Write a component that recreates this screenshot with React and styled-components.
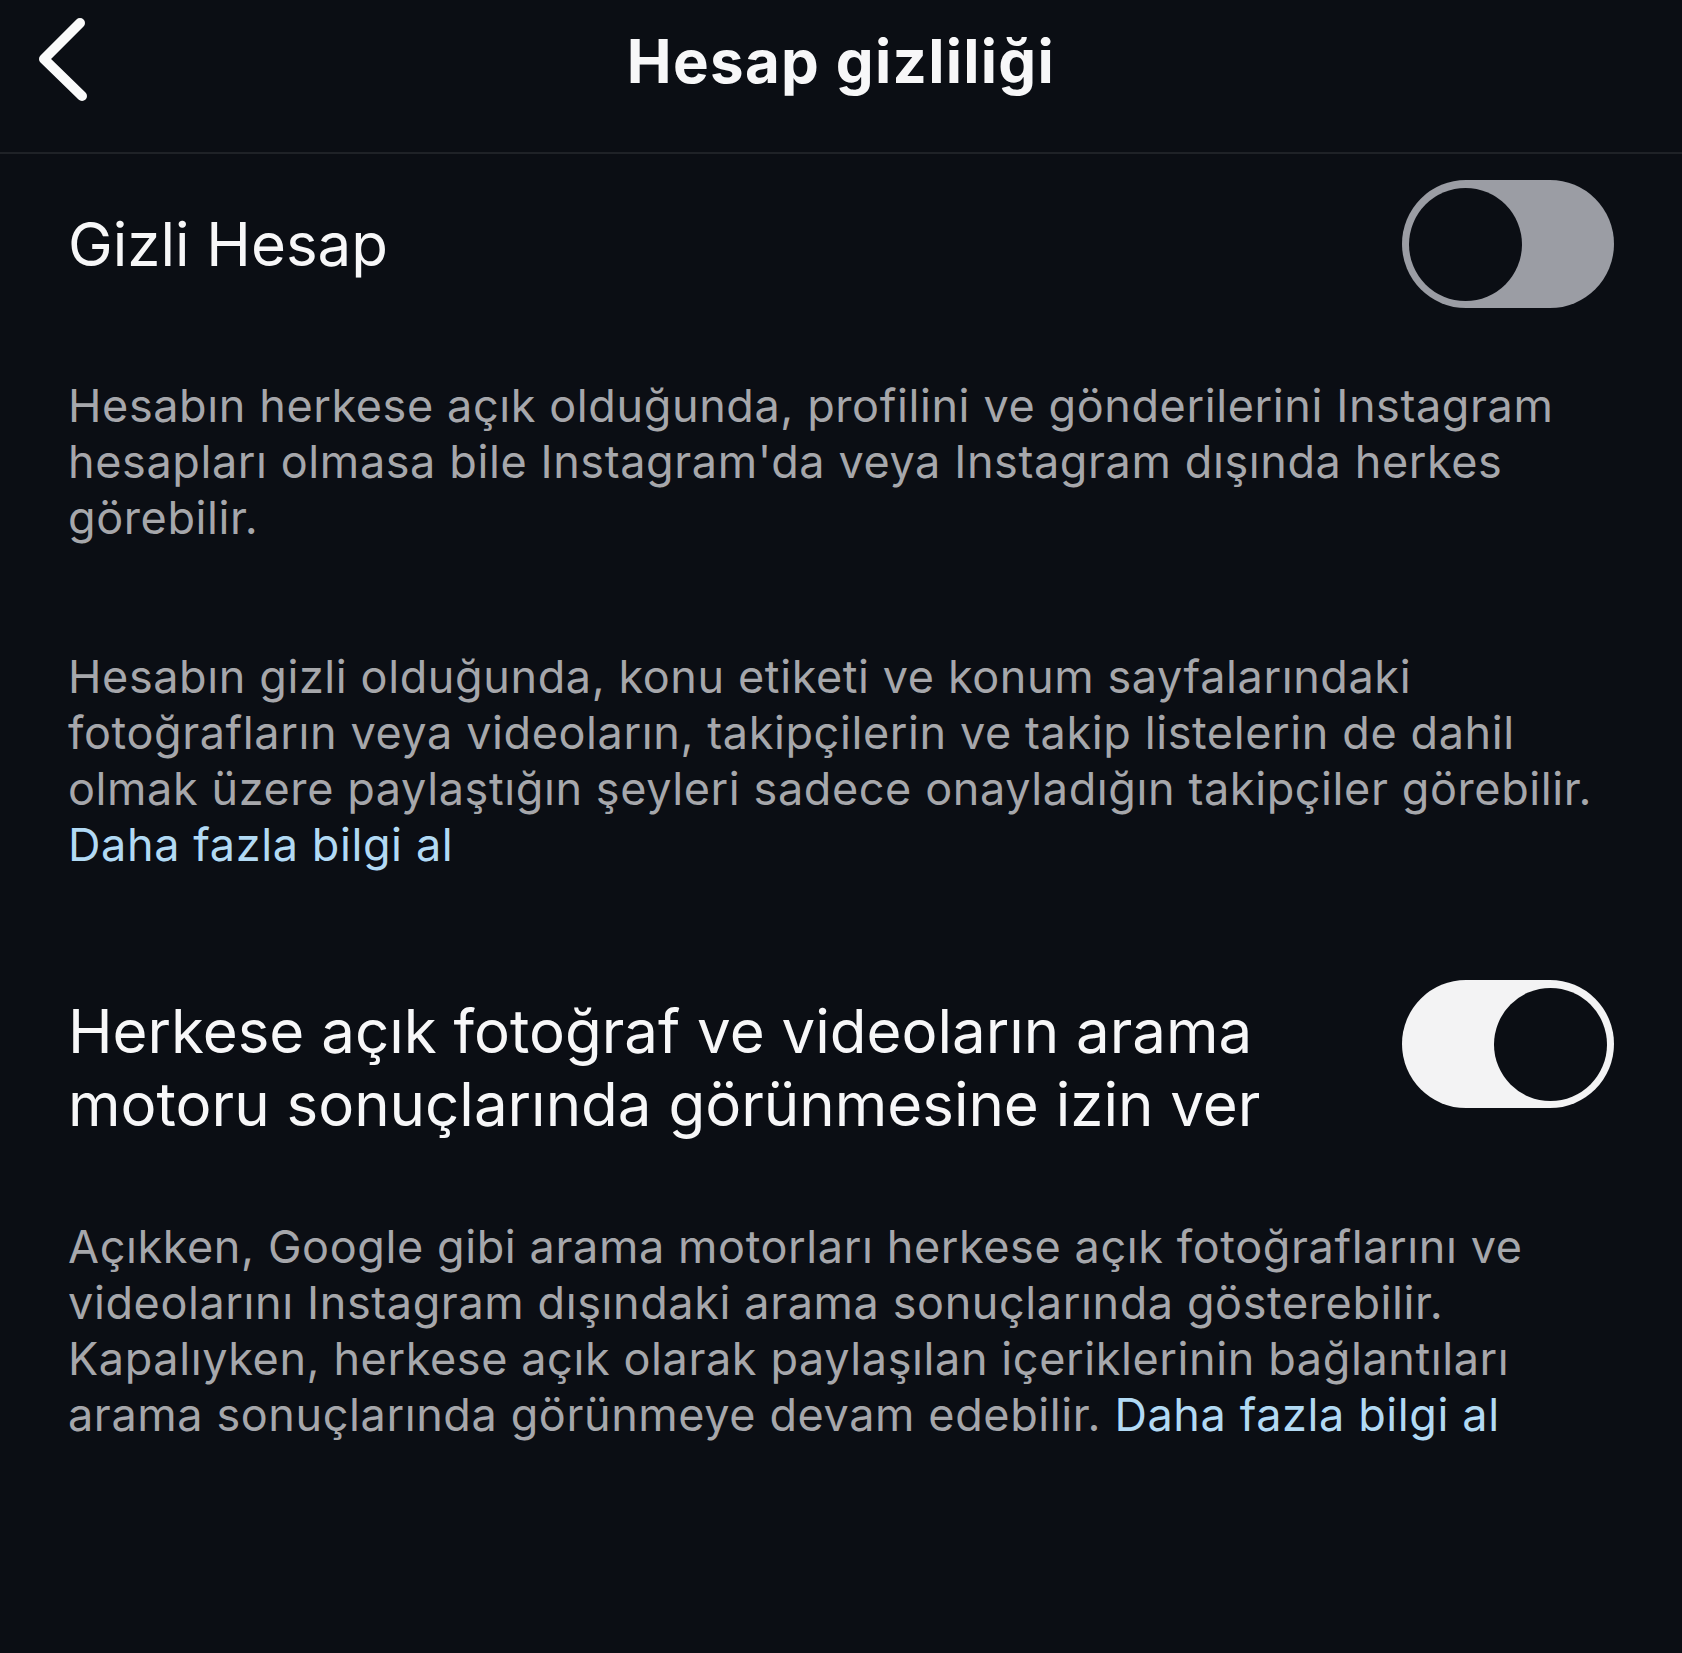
import styled, { createGlobalStyle } from "styled-components";

const COLORS = {
  bg: "#0b0e14",
  divider: "#1f2227",
  title: "#f7f7f8",
  text: "#a6a7ab",
  link: "#b2daf4",
  trackOff: "#9b9da4",
  trackOn: "#f3f3f4",
};

const GlobalStyle = createGlobalStyle`
  * { box-sizing: border-box; }
  html, body {
    margin: 0;
    background: ${COLORS.bg};
    font-family: Inter, "Noto Sans", "Liberation Sans", sans-serif;
    -webkit-font-smoothing: antialiased;
  }
  #root { min-height: 100vh; }
`;

const Toggle = ({ on }) => (
  <Track $on={on} role="switch" aria-checked={on}>
    <Knob />
  </Track>
);

const App = () => {
  return (
    <Page>
      <GlobalStyle />
      <Header>
        <BackButton aria-label="Geri">
          <svg width="60" height="90" viewBox="0 0 60 90" fill="none">
            <polyline
              points="44,7 8,43 46,80"
              stroke="#fafafa"
              strokeWidth="10"
              strokeLinecap="round"
              strokeLinejoin="round"
            />
          </svg>
        </BackButton>
        <HeaderTitle>Hesap gizliliği</HeaderTitle>
        <span />
      </Header>

      <Content>
        <SettingRow>
          <SettingLabel>Gizli Hesap</SettingLabel>
          <Toggle on={false} />
        </SettingRow>

        <Description $gap={70}>
          Hesabın herkese açık olduğunda, profilini ve gönderilerini Instagram
          hesapları olmasa bile Instagram'da veya Instagram dışında herkes
          görebilir.
        </Description>

        <Description $gap={103}>
          Hesabın gizli olduğunda, konu etiketi ve konum sayfalarındaki
          fotoğrafların veya videoların, takipçilerin ve takip listelerin de
          dahil olmak üzere paylaştığın şeyleri sadece onayladığın takipçiler
          görebilir. <br />
          <Link href="#">Daha fazla bilgi al</Link>
        </Description>

        <SettingRow $top>
          <SettingLabel $multiline>
            Herkese açık fotoğraf ve videoların arama motoru sonuçlarında
            görünmesine izin ver
          </SettingLabel>
          <Toggle on />
        </SettingRow>

        <Description $gap={78}>
          Açıkken, Google gibi arama motorları herkese açık fotoğraflarını ve
          videolarını Instagram dışındaki arama sonuçlarında gösterebilir.
          Kapalıyken, herkese açık olarak paylaşılan içeriklerinin bağlantıları
          arama sonuçlarında görünmeye devam edebilir.{" "}
          <Link href="#">Daha fazla bilgi al</Link>
        </Description>
      </Content>
    </Page>
  );
};

const Page = styled.div`
  min-height: 100vh;
  background: ${COLORS.bg};
`;

const Header = styled.header`
  display: grid;
  grid-template-columns: 1fr auto 1fr;
  align-items: center;
  height: 154px;
  padding-bottom: 30px;
  border-bottom: 2px solid ${COLORS.divider};
`;

const BackButton = styled.button`
  display: flex;
  align-items: center;
  justify-self: start;
  margin-left: 36px;
  padding: 0;
  background: none;
  border: none;
  cursor: pointer;
`;

const HeaderTitle = styled.h1`
  margin: 0;
  color: ${COLORS.title};
  font-size: 60px;
  font-weight: 700;
  letter-spacing: 1.3px;
  line-height: 1.2;
`;

const Content = styled.main`
  display: flex;
  flex-direction: column;
  padding: 26px 68px 0 68px;
`;

const SettingRow = styled.div`
  display: flex;
  justify-content: space-between;
  align-items: ${(p) => (p.$top ? "flex-start" : "center")};
  gap: 80px;
  margin-top: ${(p) => (p.$top ? "107px" : "0")};
`;

const SettingLabel = styled.div`
  flex: 1;
  max-width: 1240px;
  color: ${COLORS.title};
  font-size: 60px;
  font-weight: 400;
  line-height: ${(p) => (p.$multiline ? "73px" : "1.2")};
  padding-top: ${(p) => (p.$multiline ? "15px" : "0")};
`;

const Description = styled.p`
  margin: ${(p) => p.$gap}px 0 0 0;
  color: ${COLORS.text};
  font-size: 45px;
  line-height: 56px;
  letter-spacing: 0.6px;
`;

const Link = styled.a`
  color: ${COLORS.link};
  text-decoration: none;
`;

const Track = styled.div`
  flex: none;
  display: flex;
  justify-content: ${(p) => (p.$on ? "flex-end" : "flex-start")};
  align-items: center;
  width: 212px;
  height: 128px;
  padding: 0 7px;
  border-radius: 64px;
  background: ${(p) => (p.$on ? COLORS.trackOn : COLORS.trackOff)};
`;

const Knob = styled.div`
  width: 113px;
  height: 113px;
  border-radius: 50%;
  background: ${COLORS.bg};
`;

export default App;
